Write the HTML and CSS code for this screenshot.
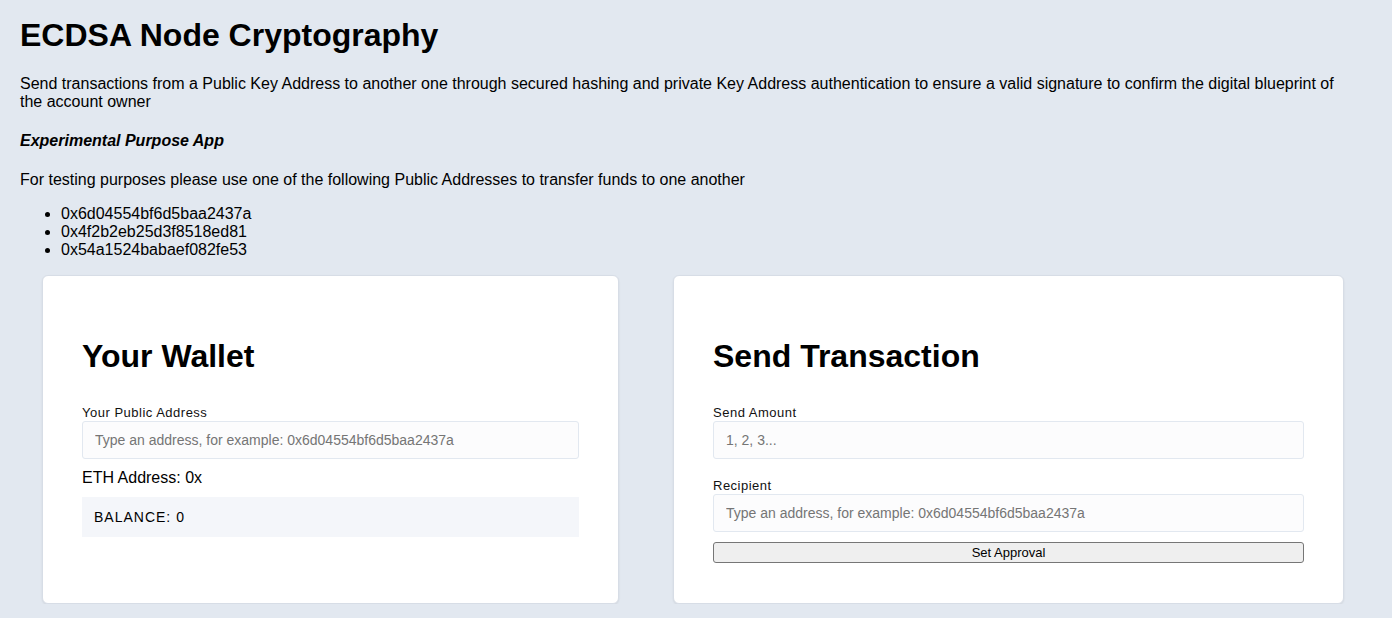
FILE: index.html
```html
<!DOCTYPE html>
<html lang="en">
<head>
<meta charset="utf-8">
<title>ECDSA Node Cryptography</title>
<link rel="stylesheet" href="styles.css">
</head>
<body>
<div class="page">
  <h1 class="title">ECDSA Node Cryptography</h1>
  <p class="intro">Send transactions from a Public Key Address to another one through secured hashing and private Key Address authentication to ensure a valid signature to confirm the digital blueprint of the account owner</p>
  <p class="tag">Experimental Purpose App</p>
  <p class="hint">For testing purposes please use one of the following Public Addresses to transfer funds to one another</p>
  <ul class="addresses">
    <li>0x6d04554bf6d5baa2437a</li>
    <li>0x4f2b2eb25d3f8518ed81</li>
    <li>0x54a1524babaef082fe53</li>
  </ul>
  <div class="cards">
    <div class="card wallet">
      <h1 class="card-title">Your Wallet</h1>
      <label class="field">
        <span class="field-label">Your Public Address</span>
        <input class="field-input" type="text" placeholder="Type an address, for example: 0x6d04554bf6d5baa2437a">
      </label>
      <div class="eth">ETH Address: 0x</div>
      <div class="balance">Balance: 0</div>
    </div>
    <div class="card transfer">
      <h1 class="card-title">Send Transaction</h1>
      <label class="field field-spaced">
        <span class="field-label">Send Amount</span>
        <input class="field-input" type="text" placeholder="1, 2, 3...">
      </label>
      <label class="field">
        <span class="field-label">Recipient</span>
        <input class="field-input" type="text" placeholder="Type an address, for example: 0x6d04554bf6d5baa2437a">
      </label>
      <button class="approve" type="button">Set Approval</button>
    </div>
  </div>
</div>
</body>
</html>
```

FILE: styles.css
```css
html, body {
  margin: 0;
  padding: 0;
}
body {
  background: #e2e8f0;
  font-family: "Liberation Sans", Arial, Helvetica, sans-serif;
  color: #000;
}
.page {
  padding: 0 20px;
}
.title {
  font-size: 32px;
  line-height: 37px;
  font-weight: 700;
  margin: 17px 0 0;
}
.intro, .tag, .hint {
  font-size: 16px;
  line-height: 18px;
  margin: 0;
}
.intro {
  margin-top: 21px;
  max-width: 1325px;
}
.tag {
  margin-top: 21px;
  font-weight: 700;
  font-style: italic;
}
.hint {
  margin-top: 21px;
}
.addresses {
  margin: 16px 0 0;
  padding-left: 41px;
  font-size: 16px;
  line-height: 18px;
}
.cards {
  display: flex;
  gap: 54px;
  margin-top: 16px;
  padding-left: 22px;
  align-items: stretch;
}
.card {
  background: #fff;
  border: 1px solid #d7dde6;
  border-radius: 6px;
  box-shadow: 0 1px 2px rgba(0, 0, 0, 0.08);
  padding: 40px 39px;
  box-sizing: border-box;
  display: flex;
  flex-direction: column;
}
.wallet {
  flex: 0 0 577px;
}
.transfer {
  flex: 0 0 671px;
}
.card-title {
  font-size: 32px;
  line-height: 37px;
  font-weight: 700;
  margin: 22px 0 30px;
}
.field {
  display: flex;
  flex-direction: column;
  margin-bottom: 10px;
}
.field-spaced {
  margin-bottom: 19px;
}
.field-label {
  font-size: 13px;
  line-height: 16px;
  letter-spacing: 0.5px;
  color: #111;
}
.field-input {
  box-sizing: border-box;
  width: 100%;
  height: 38px;
  margin: 0;
  padding: 0 12px;
  border: 1px solid #e2e8f0;
  border-radius: 3px;
  background: #fcfcfd;
  font-family: "Liberation Sans", Arial, sans-serif;
  font-size: 14px;
  color: #222;
  outline: none;
}
.field-input::placeholder {
  color: #757575;
}
.eth {
  font-size: 16px;
  line-height: 18px;
}
.balance {
  margin-top: 10px;
  height: 40px;
  background: #f4f6fa;
  padding: 0 12px;
  display: flex;
  align-items: center;
  font-size: 14px;
  letter-spacing: 1px;
  text-transform: uppercase;
}
.approve {
  margin-top: 0;
  height: 21px;
  padding: 0;
  width: 100%;
  border: 1px solid #767676;
  border-radius: 3px;
  background: #efefef;
  font-family: "Liberation Sans", Arial, sans-serif;
  font-size: 13px;
  color: #000;
}
```
